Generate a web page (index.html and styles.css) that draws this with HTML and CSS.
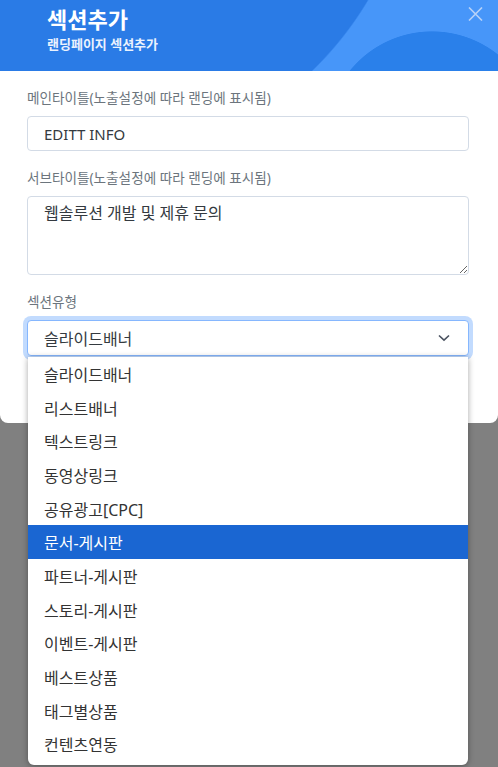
FILE: index.html
```html
<!DOCTYPE html>
<html lang="ko">
<head>
<meta charset="utf-8">
<title>섹션추가</title>
<link rel="stylesheet" href="styles.css">
</head>
<body>
<div class="modal">
  <div class="modal-header">
    <div class="heading">
      <div class="title">섹션추가</div>
      <div class="subtitle">랜딩페이지 섹션추가</div>
    </div>
    <button class="close" type="button" aria-label="닫기">
      <svg width="15" height="14" viewBox="0 0 15 14"><path d="M1 0.5 L14 13.5 M14 0.5 L1 13.5" stroke="currentColor" stroke-width="1.6" fill="none"/></svg>
    </button>
  </div>
  <div class="modal-body">
    <div class="field">
      <label class="label">메인타이틀(노출설정에 따라 랜딩에 표시됨)</label>
      <input class="input" type="text" value="EDITT INFO">
    </div>
    <div class="field">
      <label class="label">서브타이틀(노출설정에 따라 랜딩에 표시됨)</label>
      <textarea class="textarea">웹솔루션 개발 및 제휴 문의</textarea>
    </div>
    <div class="field">
      <label class="label">섹션유형</label>
      <div class="select-wrap">
        <div class="select">
          <span>슬라이드배너</span>
          <svg width="12" height="8" viewBox="0 0 12 8"><path d="M1 1.5 L6 6.2 L11 1.5" stroke="#4a5260" stroke-width="1.6" fill="none"/></svg>
        </div>
        <ul class="options">
          <li class="option">슬라이드배너</li>
          <li class="option">리스트배너</li>
          <li class="option">텍스트링크</li>
          <li class="option">동영상링크</li>
          <li class="option">공유광고[CPC]</li>
          <li class="option selected">문서-게시판</li>
          <li class="option">파트너-게시판</li>
          <li class="option">스토리-게시판</li>
          <li class="option">이벤트-게시판</li>
          <li class="option">베스트상품</li>
          <li class="option">태그별상품</li>
          <li class="option">컨텐츠연동</li>
        </ul>
      </div>
    </div>
  </div>
</div>
</body>
</html>
```
FILE: styles.css
```css
* { box-sizing: border-box; }
html, body { margin: 0; padding: 0; }
body {
  background: #808080;
  font-family: "Noto Sans", "Noto Sans CJK KR", sans-serif;
  width: 498px;
  height: 767px;
  overflow: hidden;
}
.modal {
  background: #fff;
  height: 423px;
  border-radius: 0 0 8px 8px;
}
.modal-header {
  height: 71px;
  display: flex;
  justify-content: space-between;
  align-items: flex-start;
  padding: 7px 15px 0 47px;
  background:
    radial-gradient(circle 343px at 74px -175px, #2a7be6 99.6%, rgba(42,123,230,0) 100%),
    radial-gradient(circle 106px at 432px 137px, #2a80ea 99.3%, rgba(42,128,234,0) 100%),
    #4796f9;
  color: #fff;
}
.title {
  font-size: 22px;
  font-weight: 700;
  line-height: 24px;
}
.subtitle {
  font-size: 13px;
  font-weight: 700;
  line-height: 16px;
  margin-top: 5px;
  color: #eaf2fe;
}
.close {
  border: 0;
  background: none;
  padding: 0;
  margin: 0;
  color: #b7d2f8;
  display: block;
  line-height: 0;
}
.modal-body {
  padding: 17px 29px 0 27px;
}
.field { margin-bottom: 17px; }
.label {
  display: block;
  font-size: 13.6px;
  line-height: 20px;
  color: #6c757d;
  margin-bottom: 8px;
}
.input, .textarea, .select {
  display: block;
  width: 100%;
  border: 1px solid #d3dbe6;
  border-radius: 4px;
  font-family: inherit;
  font-size: 16px;
  color: #343a40;
  background: #fff;
  margin: 0;
}
.input {
  height: 35px;
  padding: 0 16px;
  font-size: 15px;
}
.textarea {
  height: 79px;
  padding: 5px 16px;
  line-height: 22px;
  resize: vertical;
}
.select-wrap { position: relative; }
.select {
  height: 36px;
  display: flex;
  align-items: center;
  justify-content: space-between;
  padding: 0 18px 0 16px;
  border-color: #86b7fe;
  box-shadow: 0 0 0 4px rgba(13,110,253,.25);
}
.options {
  position: absolute;
  top: 37px;
  left: 1px;
  width: 440px;
  margin: 0;
  padding: 0 0 4px;
  list-style: none;
  background: #fff;
  border-radius: 0 0 6px 6px;
  box-shadow: 0 1px 6px rgba(0,0,0,.35);
}
.option {
  height: 33.7px;
  display: flex;
  align-items: center;
  padding: 0 16px;
  font-size: 16px;
  color: #333;
}
.option.selected {
  background: #1a66d2;
  color: #fff;
}
```
